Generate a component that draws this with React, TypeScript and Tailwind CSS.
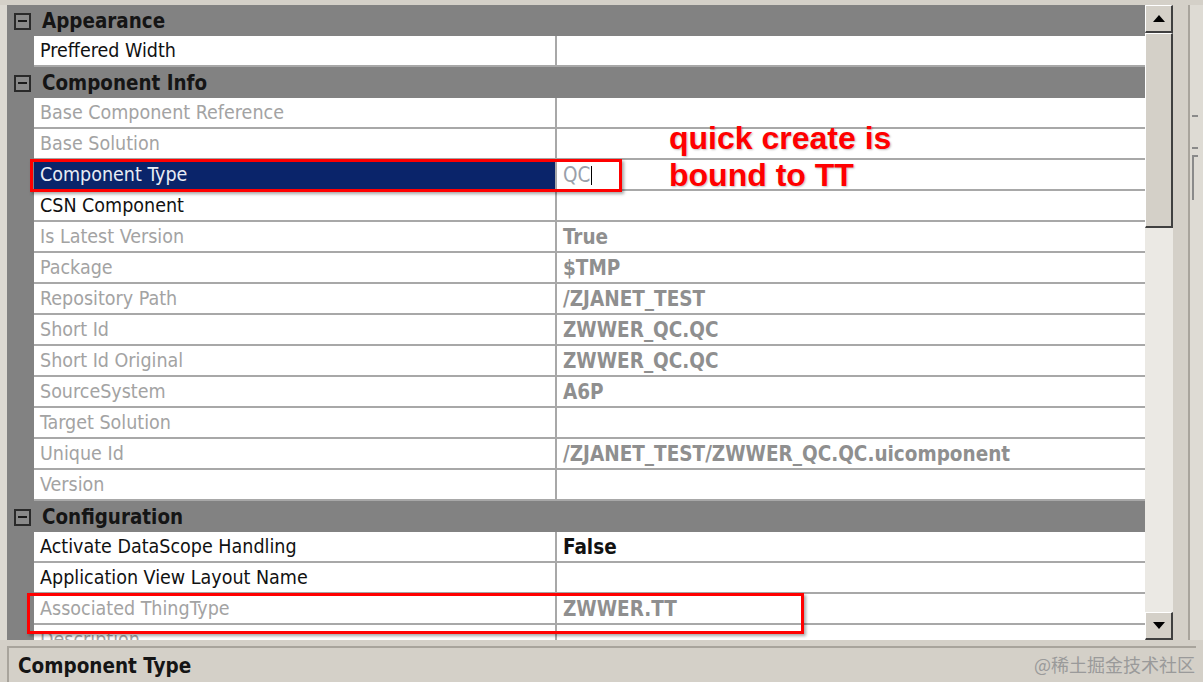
import React from "react";

type Row =
  | { kind: "cat"; label: string }
  | { kind: "prop"; label: string; value?: string; ro?: boolean; strongValue?: boolean; selected?: boolean };

const rows: Row[] = [
  { kind: "cat", label: "Appearance" },
  { kind: "prop", label: "Preffered Width" },
  { kind: "cat", label: "Component Info" },
  { kind: "prop", label: "Base Component Reference", ro: true },
  { kind: "prop", label: "Base Solution", ro: true },
  { kind: "prop", label: "Component Type", value: "QC", selected: true },
  { kind: "prop", label: "CSN Component" },
  { kind: "prop", label: "Is Latest Version", value: "True", ro: true },
  { kind: "prop", label: "Package", value: "$TMP", ro: true },
  { kind: "prop", label: "Repository Path", value: "/ZJANET_TEST", ro: true },
  { kind: "prop", label: "Short Id", value: "ZWWER_QC.QC", ro: true },
  { kind: "prop", label: "Short Id Original", value: "ZWWER_QC.QC", ro: true },
  { kind: "prop", label: "SourceSystem", value: "A6P", ro: true },
  { kind: "prop", label: "Target Solution", ro: true },
  { kind: "prop", label: "Unique Id", value: "/ZJANET_TEST/ZWWER_QC.QC.uicomponent", ro: true },
  { kind: "prop", label: "Version", ro: true },
  { kind: "cat", label: "Configuration" },
  { kind: "prop", label: "Activate DataScope Handling", value: "False", strongValue: true },
  { kind: "prop", label: "Application View Layout Name" },
  { kind: "prop", label: "Associated ThingType", value: "ZWWER.TT", ro: true },
  { kind: "prop", label: "Description", ro: true },
];

function MinusBox() {
  return (
    <div className="flex h-[17px] w-[17px] items-center justify-center border-2 border-[#2a2a2a] bg-[#8a8a8a]">
      <div className="h-[2px] w-[9px] bg-[#1a1a1a]" />
    </div>
  );
}

function GridRow({ row }: { row: Row }) {
  if (row.kind === "cat") {
    return (
      <div className="flex h-[31px] shrink-0 items-center bg-[#828282] pt-[1px]">
        <div className="flex w-[27px] shrink-0 items-center justify-center pl-[4px]">
          <MinusBox />
        </div>
        <span className="pl-[8px] text-[20.4px] font-bold text-[#151515]">{row.label}</span>
      </div>
    );
  }
  return (
    <div className="flex h-[31px] shrink-0 bg-[#828282]">
      <div className="w-[27px] shrink-0" />
      <div className="flex flex-1 border-b-2 border-[#a8a8a8] bg-white">
        <div
          className={
            "flex w-[521px] shrink-0 items-center pl-[6px] pt-[1px] text-[19.5px] " +
            (row.selected ? "bg-[#0a246a] text-[#e8ecf5]" : row.ro ? "text-[#a3a3a3]" : "text-[#111]")
          }
        >
          {row.label}
        </div>
        <div className="w-[2px] shrink-0 bg-[#a8a8a8]" />
        <div
          className={
            "flex flex-1 items-center pl-[6px] pt-[1px] text-[20.5px] " +
            (row.strongValue ? "font-bold text-[#111]" : row.selected ? "text-[#9aa0aa]" : "font-bold text-[#8f8f8f]")
          }
        >
          {row.value}
          {row.selected && <span className="ml-[1px] h-[19px] w-[1px] bg-black" />}
        </div>
      </div>
    </div>
  );
}

function ScrollBar() {
  return (
    <div className="flex w-[28px] shrink-0 flex-col bg-[#d4d0c8]">
      <div className="flex h-[28px] shrink-0 items-center justify-center border-r-2 border-b-2 border-[#404040] border-l border-t border-l-white border-t-white bg-[#d4d0c8]">
        <svg width="12" height="7" viewBox="0 0 12 7"><path d="M6 0L12 7H0z" fill="#000" /></svg>
      </div>
      <div className="h-[195px] shrink-0 border-r-2 border-b-2 border-[#404040] border-l border-t border-l-white border-t-white bg-[#d4d0c8]" />
      <div className="flex-1 bg-[#ebe9e4]" />
      <div className="flex h-[28px] shrink-0 items-center justify-center border-r-2 border-b-2 border-[#404040] border-l border-t border-l-white border-t-white bg-[#d4d0c8]">
        <svg width="12" height="7" viewBox="0 0 12 7"><path d="M0 0H12L6 7z" fill="#000" /></svg>
      </div>
    </div>
  );
}

export default function App() {
  return (
    <div
      className="relative flex h-[682px] w-[1203px] flex-col overflow-hidden bg-[#d4d0c8]"
      style={{ fontFamily: "Tahoma, 'DejaVu Sans Condensed', 'Liberation Sans', sans-serif" }}
    >
      <div className="flex h-[640px] shrink-0 pt-[5px]">
        <div className="w-[7px] shrink-0 bg-[#dcd9d2]" />
        <div className="flex min-w-0 flex-1 flex-col overflow-hidden">
          {rows.map((r) => (
            <GridRow key={r.label} row={r} />
          ))}
        </div>
        <ScrollBar />
        <div className="w-[15px] shrink-0 bg-[#d4d0c8]" />
        <div className="w-[2px] shrink-0 bg-[#a8a49c]" />
        <div className="flex w-[13px] shrink-0 flex-col bg-[#dedbd4] pl-[2px] pt-[110px]">
          <div className="h-[2px] w-[6px] bg-[#8a8a8a]" />
          <div className="mt-[30px] h-[2px] w-[6px] bg-[#8a8a8a]" />
          <div className="mt-[6px] h-[45px] w-[6px] border-l-2 border-t-2 border-[#8a8a8a]" />
        </div>
      </div>

      <div className="mx-[7px] mt-[6px] flex h-[36px] items-center border-t-2 border-l-2 border-[#a8a49c] pl-[9px] pt-[2px]">
        <span className="text-[20.5px] font-bold text-[#151515]">Component Type</span>
      </div>
      <span
        className="absolute right-[8px] bottom-[4px] text-[18px] text-[#9a9a9a]"
        style={{ fontFamily: "'Noto Sans CJK SC', sans-serif" }}
      >
        @稀土掘金技术社区
      </span>

      {/* annotations */}
      <div className="absolute left-[30px] top-[159px] h-[33px] w-[592px] border-[3px] border-[#ff0000] shadow-[2px_2px_3px_rgba(0,0,0,0.35)]" />
      <div className="absolute left-[27px] top-[593px] h-[41px] w-[777px] border-[3px] border-[#ff0000] shadow-[2px_2px_3px_rgba(0,0,0,0.35)]" />
      <div
        className="absolute left-[669px] top-[120px] text-[32px] font-bold leading-[37px] text-[#ff0000]"
        style={{ fontFamily: "'Liberation Sans', Arial, sans-serif", textShadow: "1px 1px 2px rgba(0,0,0,0.25)" }}
      >
        quick create is
        <br />
        bound to TT
      </div>
    </div>
  );
}
